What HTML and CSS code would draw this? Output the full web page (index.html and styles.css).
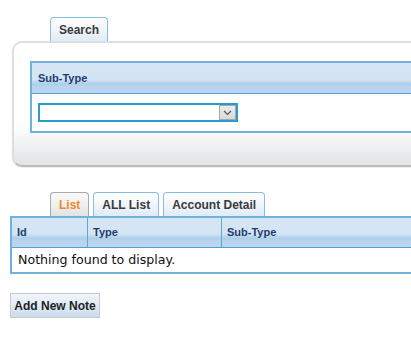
FILE: index.html
```html
<!DOCTYPE html>
<html lang="en">

<head>
     <meta charset="UTF-8">
     <meta name="viewport" content="width=device-width, initial-scale=1.0">
     <title>Notes</title>
     <link rel="stylesheet" href="styles.css">
</head>

<body>
     <div class="page">

          <!-- Search panel -->
          <div class="search-box">
               <div class="tabs">
                    <span class="tab">Search</span>
               </div>
               <div class="panel">
                    <div class="grid search-grid">
                         <div class="grid-head">
                              <div class="head-cell">Sub-Type</div>
                         </div>
                         <div class="search-row">
                              <div class="select">
                                   <span class="select-value"></span>
                                   <span class="select-arrow">
                                        <svg width="9" height="6" viewBox="0 0 9 6">
                                             <path d="M1 1 L4.5 4.5 L8 1" fill="none" stroke="#555" stroke-width="1.2"/>
                                        </svg>
                                   </span>
                              </div>
                         </div>
                    </div>
               </div>
          </div>

          <!-- Result list -->
          <div class="list-box">
               <div class="tabs">
                    <span class="tab active">List</span>
                    <span class="tab">ALL List</span>
                    <span class="tab">Account Detail</span>
               </div>
               <div class="grid list-grid">
                    <div class="grid-head">
                         <div class="head-cell col-id">Id</div>
                         <div class="head-cell col-type">Type</div>
                         <div class="head-cell col-sub">Sub-Type</div>
                    </div>
                    <div class="empty-row">Nothing found to display.</div>
               </div>
          </div>

          <button class="add-btn">Add New Note</button>
     </div>
</body>

</html>
```

FILE: styles.css
```css
html,
body {
     margin: 0;
     padding: 0;
     background: #fff;
}

.page {
     width: 411px;
     height: 349px;
     overflow: hidden;
     font-family: "Liberation Sans", Arial, sans-serif;
}

/* tabs */
.tabs {
     display: flex;
     gap: 4px;
     padding-left: 50px;
     height: 24px;
}

.tab {
     box-sizing: border-box;
     height: 24px;
     padding: 0 8px;
     line-height: 24px;
     font-size: 12px;
     font-weight: bold;
     color: #3a3a3a;
     border: 1px solid #86bde3;
     border-bottom: none;
     border-radius: 4px 4px 0 0;
     background: linear-gradient(to bottom, #ffffff 0%, #f4f8fc 40%, #dfebf7 100%);
}

.tab.active {
     color: #f08a26;
     border-color: #a9a9a9;
     background: linear-gradient(to bottom, #fafafa 0%, #f0f0f0 50%, #e2e2e2 100%);
}

.tab.wide {
     padding: 0 7px;
}

/* search panel */
.search-box {
     padding-top: 17px;
}

.search-box .tabs {
     padding-left: 38px;
     margin-left: 12px;
}

.panel {
     margin-left: 12px;
     width: 600px;
     padding: 18px 0 32px 16px;
     border: 2px solid #dedede;
     border-bottom-color: #bcbcbc;
     border-radius: 10px;
     box-shadow: 0 1px 1px rgba(0, 0, 0, 0.08);
     background: linear-gradient(to bottom, #ffffff 0%, #ffffff 66%, #f3f5f5 80%, #e0e4e5 100%);
}

/* grids */
.grid {
     border: 2px solid #70b2dc;
     background: #fff;
}

.grid-head {
     display: flex;
     border-bottom: 1px solid #4aa3d3;
     background: linear-gradient(to bottom, #d6e6f5 0%, #d4e4f4 55%, #abcfe9 70%, #bbd3ee 80%, #bdd4ef 100%);
}

.head-cell {
     box-sizing: border-box;
     font-size: 11px;
     font-weight: bold;
     color: #1d3c6e;
}

.search-grid .grid-head {
     height: 30px;
}

.search-grid .head-cell {
     line-height: 30px;
     padding-left: 6px;
}

.search-row {
     height: 37px;
     padding: 9px 0 0 6px;
     box-sizing: border-box;
}

.select {
     display: flex;
     box-sizing: border-box;
     width: 200px;
     height: 19px;
     border: 2px solid #2a9ad2;
     background: #fff;
}

.select-value {
     flex: 1;
}

.select-arrow {
     box-sizing: border-box;
     width: 17px;
     display: flex;
     align-items: center;
     justify-content: center;
     border: 1px solid #a8a8a8;
     background: linear-gradient(to bottom, #ececec, #dadada);
}

/* result list */
.list-box {
     margin-top: 25px;
}

.list-grid {
     margin-left: 10px;
     width: 600px;
}

.list-grid .grid-head {
     height: 29px;
}

.list-grid .head-cell {
     line-height: 29px;
     padding-left: 5px;
     border-right: 1px solid #5aaad8;
}

.list-grid .col-id {
     width: 76px;
}

.list-grid .col-type {
     width: 134px;
}

.list-grid .col-sub {
     flex: 1;
     border-right: none;
}

.empty-row {
     height: 24px;
     line-height: 24px;
     padding-left: 6px;
     font-family: "DejaVu Sans", Verdana, sans-serif;
     font-size: 12.6px;
     color: #111;
}

.add-btn {
     display: block;
     margin: 19px 0 0 10px;
     width: 90px;
     height: 25px;
     padding: 0;
     font-family: "Liberation Sans", Arial, sans-serif;
     font-size: 12px;
     font-weight: bold;
     color: #222;
     border: 1px solid #c9c9c9;
     background: linear-gradient(to bottom, #f0f5fa 0%, #dfeaf5 50%, #c9dcee 100%);
     cursor: pointer;
}
```
